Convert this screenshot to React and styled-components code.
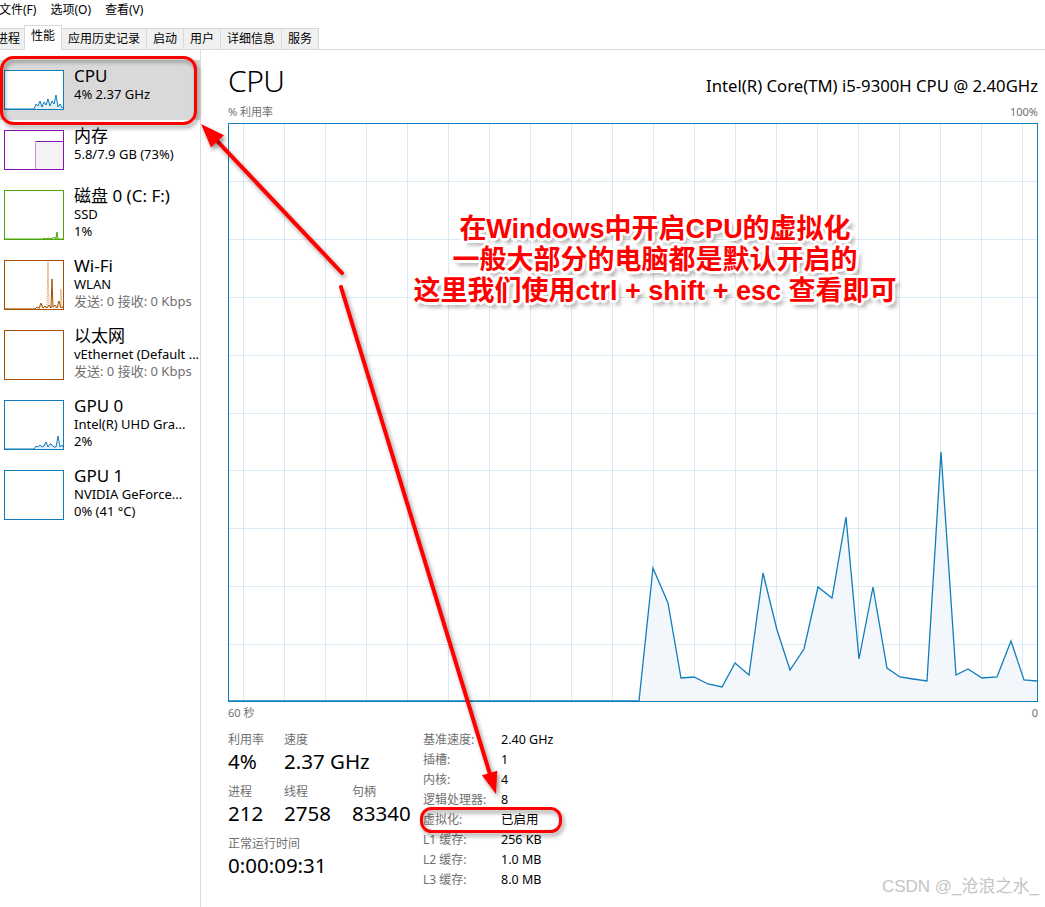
import React from 'react';
import styled, { createGlobalStyle } from 'styled-components';

const GlobalStyle = createGlobalStyle`
  html, body {
    margin: 0;
    padding: 0;
    background: #fff;
  }
  body {
    font-family: "Noto Sans", "Noto Sans CJK SC", sans-serif;
    color: #000;
    overflow: hidden;
  }
  #root {
    width: 1045px;
    height: 907px;
  }
`;

const Window = styled.div`
  position: relative;
  width: 1045px;
  height: 907px;
  overflow: hidden;
  display: flex;
  flex-direction: column;
  background: #fff;
`;

const MenuBar = styled.div`
  display: flex;
  height: 20px;
  margin-left: -8px;
  font-size: 12px;
  line-height: 20px;
`;

const MenuItem = styled.span`
  padding: 0 7px;
`;

const TabBar = styled.div`
  display: flex;
  align-items: flex-end;
  height: 24px;
  padding-top: 5px;
  margin-left: -9px;
  border-bottom: 1px solid #d9d9d9;
`;

const Tab = styled.div`
  position: relative;
  z-index: ${p => (p.$active ? 1 : 0)};
  box-sizing: border-box;
  height: ${p => (p.$active ? '25px' : '21px')};
  margin-bottom: ${p => (p.$active ? '-1px' : '0')};
  margin-right: -1px;
  padding: 0 ${p => (p.$first ? '4px' : '6px')};
  border: 1px solid #d9d9d9;
  border-bottom: none;
  background: ${p => (p.$active ? '#fff' : '#f0f0f0')};
  font-size: 12px;
  line-height: 20px;
  white-space: nowrap;
`;

const Body = styled.div`
  display: flex;
  flex: 1;
  min-height: 0;
`;

const Sidebar = styled.div`
  width: 200px;
  flex-shrink: 0;
  padding-top: 10px;
  border-right: 1px solid #dcdcdc;
`;

const Item = styled.div`
  display: flex;
  gap: 10px;
  padding: 6px 0 10px 4px;
  background: ${p => (p.$selected ? '#d9d9d9' : 'transparent')};
`;

const Thumb = styled.div`
  box-sizing: border-box;
  width: 60px;
  min-height: 40px;
  margin-top: 4px;
  flex-shrink: 0;
  border: 1px solid ${p => p.$color};
  background: #fff;

  svg {
    display: block;
    width: 100%;
    height: 100%;
  }
`;

const ItemText = styled.div`
  display: flex;
  flex-direction: column;
  white-space: nowrap;
`;

const ItemTitle = styled.div`
  font-size: 17px;
  line-height: 20px;
`;

const ItemSub = styled.div`
  font-size: 13px;
  line-height: 17px;
  color: ${p => (p.$muted ? '#707070' : '#000')};
`;

const Main = styled.div`
  flex: 1;
  display: flex;
  flex-direction: column;
  padding: 13px 7px 0 27px;
  min-width: 0;
`;

const Header = styled.div`
  display: flex;
  justify-content: space-between;
  align-items: baseline;
  height: 36px;
`;

const Title = styled.div`
  font-size: 30px;
  font-weight: 300;
  line-height: 36px;
  letter-spacing: -0.5px;
`;

const Model = styled.div`
  font-size: 16.7px;
  line-height: 20px;
`;

const AxisRow = styled.div`
  display: flex;
  justify-content: space-between;
  font-size: 11px;
  line-height: 14px;
  color: #707070;
  padding-top: ${p => p.$top}px;
  margin-bottom: ${p => p.$bottom}px;
`;

const ChartBox = styled.div`
  box-sizing: border-box;
  width: 810px;
  height: 579px;
  border: 1px solid #117dbb;

  svg {
    display: block;
  }
`;

const StatsArea = styled.div`
  display: flex;
`;

const StatsGrid = styled.div`
  width: 195px;
  padding-top: 2px;
  display: grid;
  grid-template-columns: 56px 68px auto;
  align-content: start;
`;

const StatCell = styled.div`
  grid-column: span ${p => p.$span || 1};
  margin-bottom: 10px;
  white-space: nowrap;
`;

const StatLabel = styled.div`
  font-size: 12px;
  line-height: 16px;
  color: #707070;
`;

const StatValue = styled.div`
  font-size: 20.5px;
  line-height: 26px;
`;

const DetailsGrid = styled.div`
  display: grid;
  grid-template-columns: 78px auto;
  grid-auto-rows: 20px;
  font-size: 12.5px;
  line-height: 20px;
  white-space: nowrap;
`;

const DetailLabel = styled.div`
  color: #707070;
  font-size: 12px;
`;

const DetailValue = styled.div`
  color: #000;
`;

const Overlay = styled.svg`
  position: absolute;
  left: 0;
  top: 0;
  width: 1045px;
  height: 907px;
  pointer-events: none;
  z-index: 5;
`;

const Callout = styled.div`
  position: absolute;
  left: 355px;
  top: 214px;
  width: 600px;
  z-index: 6;
  text-align: center;
  font-family: "Liberation Sans", "Noto Sans CJK SC", sans-serif;
  font-size: 27px;
  font-weight: 700;
  line-height: 31px;
  color: #ff0000;
  white-space: nowrap;
  text-shadow:
    -2px -2px 0 #fff, 2px -2px 0 #fff, -2px 2px 0 #fff, 2px 2px 0 #fff,
    0 -3px 0 #fff, 0 3px 0 #fff, -3px 0 0 #fff, 3px 0 0 #fff,
    4px 5px 4px rgba(0, 0, 0, 0.4);
`;

const Watermark = styled.div`
  position: absolute;
  right: 6px;
  bottom: 10px;
  z-index: 6;
  font-family: "Liberation Sans", "Noto Sans CJK SC", sans-serif;
  font-size: 17px;
  color: #c4c4c4;
`;

const Spark = ({ w, h, pts, stroke, fill, dashed }) => (
  <svg viewBox={`0 0 ${w} ${h}`} preserveAspectRatio="none">
    {fill && <polygon points={`0,${h} ${pts} ${w},${h}`} fill={fill} />}
    <polyline
      points={pts}
      fill="none"
      stroke={stroke}
      strokeWidth="1"
      strokeDasharray={dashed ? '1 1' : undefined}
    />
  </svg>
);

const thumbs = {
  cpu: (
    <Spark
      w={58}
      h={38}
      stroke="#117dbb"
      fill="#e3eef7"
      pts="0,38 29,38 31,33 33,35 35,30 37,36 39,31 41,34 43,28 45,35 47,30 49,33 51,24 53,36 55,33 57,37 58,36"
    />
  ),
  mem: (
    <svg viewBox="0 0 58 38" preserveAspectRatio="none">
      <rect x="30" y="10" width="28" height="28" fill="#f4f2f4" />
      <line x1="30" y1="10.5" x2="58" y2="10.5" stroke="#8b12ae" strokeWidth="1" />
      <line x1="30.5" y1="10" x2="30.5" y2="38" stroke="#c88fd6" strokeWidth="1" />
    </svg>
  ),
  disk: (
    <Spark
      w={58}
      h={48}
      stroke="#4da60c"
      fill="#eff7e9"
      pts="0,48 38,48 39,47 40,48 44,47 45,48 48,47 50,46 51,48 52,41 53,48 58,48"
    />
  ),
  wifi: (
    <svg viewBox="0 0 58 48" preserveAspectRatio="none">
      <polyline
        points="0,48 34,48 36,44 38,47 42,46 43,1 44,46 50,47 55,45 56,28 57,46 58,47"
        fill="none"
        stroke="#d08a4e"
        strokeWidth="1"
        strokeDasharray="1 1"
      />
      <polyline
        points="0,48 30,48 32,46 34,47 36,42 38,47 40,45 42,47 44,44 46,47 47,18 48,46 50,44 52,47 54,40 56,47 58,46"
        fill="none"
        stroke="#a74f01"
        strokeWidth="1"
      />
    </svg>
  ),
  eth: <svg viewBox="0 0 58 48" />,
  gpu0: (
    <Spark
      w={58}
      h={48}
      stroke="#117dbb"
      fill="#e3eef7"
      pts="0,48 29,48 31,45 33,46 35,44 37,46 39,45 41,41 43,46 45,43 47,44 49,46 51,46 53,35 55,46 57,44 58,46"
    />
  ),
  gpu1: <svg viewBox="0 0 58 48" />,
};

const devices = [
  { key: 'cpu', title: 'CPU', color: '#117dbb', lines: [{ t: '4% 2.37 GHz' }], selected: true },
  { key: 'mem', title: '内存', color: '#8b12ae', lines: [{ t: '5.8/7.9 GB (73%)' }] },
  { key: 'disk', title: '磁盘 0 (C: F:)', color: '#4da60c', lines: [{ t: 'SSD' }, { t: '1%' }] },
  {
    key: 'wifi',
    title: 'Wi-Fi',
    color: '#a74f01',
    lines: [{ t: 'WLAN' }, { t: '发送: 0 接收: 0 Kbps', muted: true }],
  },
  {
    key: 'eth',
    title: '以太网',
    color: '#a74f01',
    lines: [{ t: 'vEthernet (Default ...' }, { t: '发送: 0 接收: 0 Kbps', muted: true }],
  },
  { key: 'gpu0', title: 'GPU 0', color: '#117dbb', lines: [{ t: 'Intel(R) UHD Gra...' }, { t: '2%' }] },
  { key: 'gpu1', title: 'GPU 1', color: '#117dbb', lines: [{ t: 'NVIDIA GeForce...' }, { t: '0% (41 °C)' }] },
];

const tabs = ['进程', '性能', '应用历史记录', '启动', '用户', '详细信息', '服务'];

const details = [
  ['基准速度:', '2.40 GHz'],
  ['插槽:', '1'],
  ['内核:', '4'],
  ['逻辑处理器:', '8'],
  ['虚拟化:', '已启用'],
  ['L1 缓存:', '256 KB'],
  ['L2 缓存:', '1.0 MB'],
  ['L3 缓存:', '8.0 MB'],
];

// usage samples, page coordinates read off the graph
const usage = [
  [639, 701], [653, 568], [668, 603], [681, 678], [694, 677], [708, 684], [722, 687],
  [735, 663], [749, 675], [763, 573], [777, 630], [790, 670], [804, 649], [818, 587],
  [832, 598], [846, 517], [859, 659], [873, 587], [887, 668], [900, 677], [913, 679],
  [927, 681], [941, 452], [956, 675], [968, 669], [982, 678], [997, 677], [1011, 641],
  [1024, 680], [1037, 681],
];

const CpuChart = () => {
  const pts = [[229, 701], ...usage].map(p => p.join(',')).join(' ');
  const gridX = Array.from({ length: 20 }, (_, k) => 243.5 + 41 * k);
  const gridY = Array.from({ length: 9 }, (_, k) => Math.round(123 + 57.9 * (k + 1)) + 0.5);
  return (
    <svg width="808" height="577" viewBox="229 124 808 577">
      {gridX.map(x => (
        <line key={x} x1={x} y1="124" x2={x} y2="701" stroke="#d9eaf4" strokeWidth="1" />
      ))}
      {gridY.map(y => (
        <line key={y} x1="229" y1={y} x2="1037" y2={y} stroke="#d9eaf4" strokeWidth="1" />
      ))}
      <polygon points={`${pts} 1037,701 229,701`} fill="#f1f6fa" fillOpacity="0.85" />
      <polyline points={pts} fill="none" stroke="#117dbb" strokeWidth="1.3" />
    </svg>
  );
};

const Annotations = () => (
  <Overlay viewBox="0 0 1045 907">
    <defs>
      <filter id="shadow" filterUnits="userSpaceOnUse" x="0" y="0" width="1045" height="907">
        <feDropShadow dx="2" dy="3" stdDeviation="2" floodColor="#000" floodOpacity="0.4" />
      </filter>
    </defs>
    <g filter="url(#shadow)" fill="none" stroke="#ff0000" strokeWidth="3">
      <rect x="1.5" y="57.5" width="194" height="66" rx="12" />
      <rect x="421.5" y="808.5" width="139" height="23" rx="10" />
    </g>
    <g filter="url(#shadow)" stroke="#ff0000" strokeWidth="4" strokeLinecap="round">
      <line x1="342" y1="273" x2="217.5" y2="141.4" />
      <line x1="341" y1="287" x2="489.6" y2="773" />
    </g>
    <g filter="url(#shadow)" fill="#ff0000">
      <polygon points="201,124 224,135.2 211,147.6" />
      <polygon points="496,794 497.3,770.7 481.9,775.3" />
    </g>
  </Overlay>
);

const App = () => (
  <Window>
    <GlobalStyle />
    <MenuBar>
      <MenuItem>文件(F)</MenuItem>
      <MenuItem>选项(O)</MenuItem>
      <MenuItem>查看(V)</MenuItem>
    </MenuBar>
    <TabBar>
      {tabs.map((t, i) => (
        <Tab key={t} $active={t === '性能'} $first={i === 0}>
          {t}
        </Tab>
      ))}
    </TabBar>
    <Body>
      <Sidebar>
        {devices.map(d => (
          <Item key={d.key} $selected={d.selected}>
            <Thumb $color={d.color}>{thumbs[d.key]}</Thumb>
            <ItemText>
              <ItemTitle>{d.title}</ItemTitle>
              {d.lines.map((l, i) => (
                <ItemSub key={i} $muted={l.muted}>
                  {l.t}
                </ItemSub>
              ))}
            </ItemText>
          </Item>
        ))}
      </Sidebar>
      <Main>
        <Header>
          <Title>CPU</Title>
          <Model>Intel(R) Core(TM) i5-9300H CPU @ 2.40GHz</Model>
        </Header>
        <AxisRow $top={6} $bottom={4}>
          <span>% 利用率</span>
          <span>100%</span>
        </AxisRow>
        <ChartBox>
          <CpuChart />
        </ChartBox>
        <AxisRow $top={4} $bottom={10}>
          <span>60 秒</span>
          <span>0</span>
        </AxisRow>
        <StatsArea>
          <StatsGrid>
            <StatCell>
              <StatLabel>利用率</StatLabel>
              <StatValue>4%</StatValue>
            </StatCell>
            <StatCell $span={2}>
              <StatLabel>速度</StatLabel>
              <StatValue>2.37 GHz</StatValue>
            </StatCell>
            <StatCell>
              <StatLabel>进程</StatLabel>
              <StatValue>212</StatValue>
            </StatCell>
            <StatCell>
              <StatLabel>线程</StatLabel>
              <StatValue>2758</StatValue>
            </StatCell>
            <StatCell>
              <StatLabel>句柄</StatLabel>
              <StatValue>83340</StatValue>
            </StatCell>
            <StatCell $span={3}>
              <StatLabel>正常运行时间</StatLabel>
              <StatValue>0:00:09:31</StatValue>
            </StatCell>
          </StatsGrid>
          <DetailsGrid>
            {details.map(([k, v]) => (
              <React.Fragment key={k}>
                <DetailLabel>{k}</DetailLabel>
                <DetailValue>{v}</DetailValue>
              </React.Fragment>
            ))}
          </DetailsGrid>
        </StatsArea>
      </Main>
    </Body>
    <Annotations />
    <Callout>
      在Windows中开启CPU的虚拟化
      <br />
      一般大部分的电脑都是默认开启的
      <br />
      这里我们使用ctrl + shift + esc 查看即可
    </Callout>
    <Watermark>CSDN @_沧浪之水_</Watermark>
  </Window>
);

export default App;
